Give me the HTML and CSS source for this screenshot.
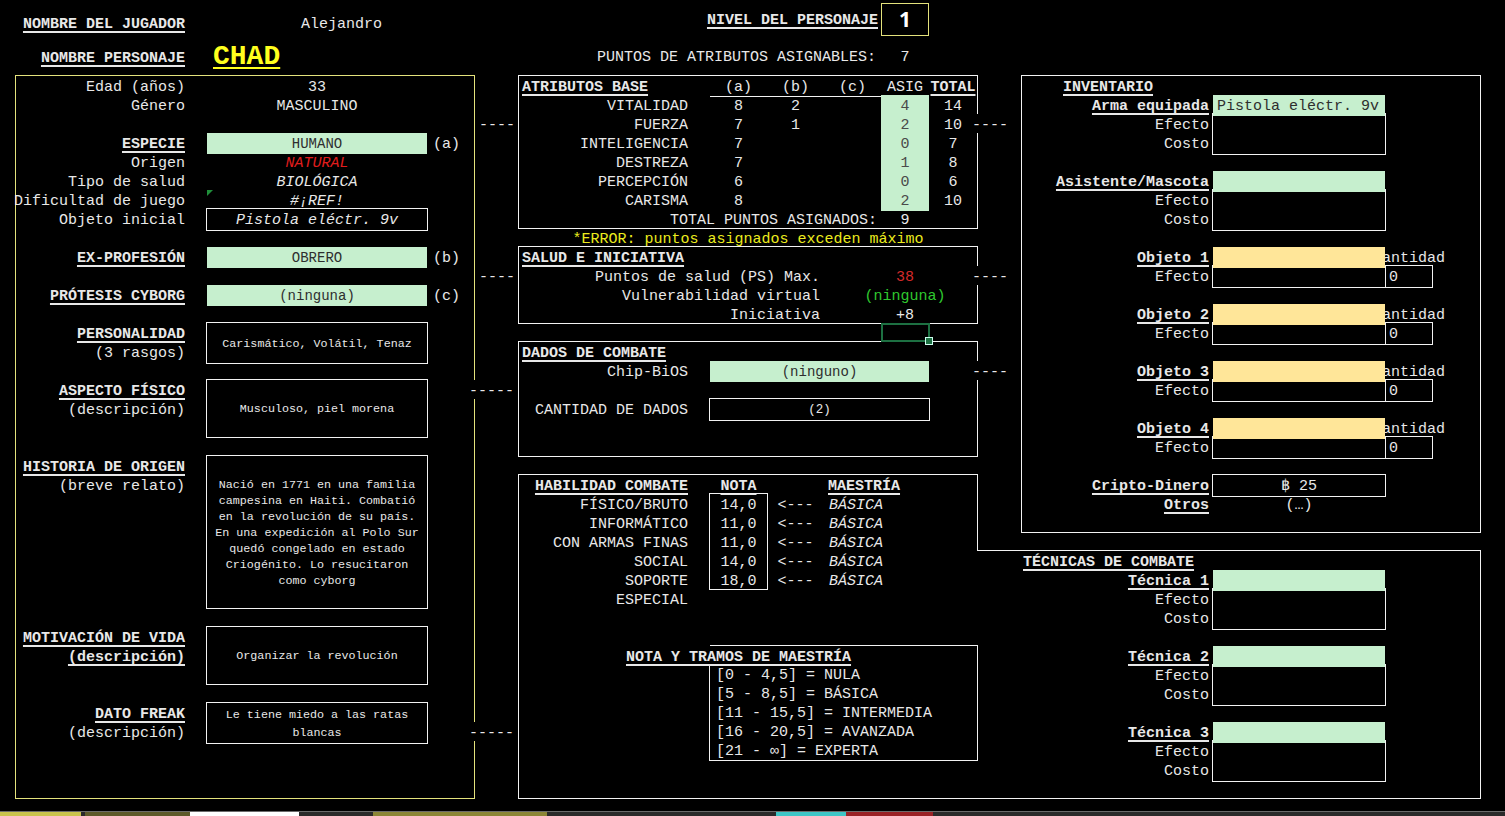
FILE: index.html
```html
<!DOCTYPE html>
<html lang="es">
<head>
<meta charset="utf-8">
<title>Hoja de personaje</title>
<link rel="stylesheet" href="styles.css">
</head>
<body>
<div class="sheet">
  <header class="hleft">
    <div class="hl-row1">
      <span class="lbl u">NOMBRE DEL JUGADOR</span>
      <span class="player">Alejandro</span>
    </div>
    <div class="hl-row2">
      <span class="lbl u">NOMBRE PERSONAJE</span>
      <span class="chad">CHAD</span>
    </div>
  </header>
  <header class="hmid">
    <div class="hm-row1"><span class="hm-lbl u">NIVEL DEL PERSONAJE</span><span class="level">1</span></div>
    <div class="hm-row2"><span class="hm-lbl2">PUNTOS DE ATRIBUTOS ASIGNABLES:</span><span class="c">7</span></div>
  </header>

  <section class="pleft">
    <div class="lr"><span class="lbl">Edad (años)</span><span class="v">33</span></div>
    <div class="lr"><span class="lbl">Género</span><span class="v">MASCULINO</span></div>
    <div class="lr"></div>
    <div class="lr"><span class="lbl u">ESPECIE</span><span class="v g">HUMANO</span><span class="sfx">(a)</span></div>
    <div class="lr"><span class="lbl">Origen</span><span class="v i red">NATURAL</span></div>
    <div class="lr"><span class="lbl">Tipo de salud</span><span class="v i">BIOLÓGICA</span></div>
    <div class="lr"><span class="lbl">Dificultad de juego</span><span class="v i errcell">#¡REF!</span></div>
    <div class="lr"><span class="lbl">Objeto inicial</span><span class="v i bx">Pistola eléctr. 9v</span></div>
    <div class="lr"></div>
    <div class="lr"><span class="lbl u">EX-PROFESIÓN</span><span class="v g">OBRERO</span><span class="sfx">(b)</span></div>
    <div class="lr"></div>
    <div class="lr"><span class="lbl u">PRÓTESIS CYBORG</span><span class="v g">(ninguna)</span><span class="sfx">(c)</span></div>
    <div class="lr"></div>
    <div class="lr h2"><span class="lbl st"><span class="u">PERSONALIDAD</span><span>(3 rasgos)</span></span><span class="v bx sm">Carismático, Volátil, Tenaz</span></div>
    <div class="lr"></div>
    <div class="lr h3"><span class="lbl st"><span class="u">ASPECTO FÍSICO</span><span>(descripción)</span></span><span class="v bx sm">Musculoso, piel morena</span></div>
    <div class="lr"></div>
    <div class="lr h8"><span class="lbl st"><span class="u">HISTORIA DE ORIGEN</span><span>(breve relato)</span></span><span class="v bx sm">Nació en 1771 en una familia<br>campesina en Haiti. Combatió<br>en la revolución de su país.<br>En una expedición al Polo Sur<br>quedó congelado en estado<br>Criogénito. Lo resucitaron<br>como cyborg</span></div>
    <div class="lr"></div>
    <div class="lr h3"><span class="lbl st"><span class="u">MOTIVACIÓN DE VIDA</span><span class="u">(descripción)</span></span><span class="v bx sm">Organizar la revolución</span></div>
    <div class="lr"></div>
    <div class="lr h2"><span class="lbl st"><span class="u">DATO FREAK</span><span>(descripción)</span></span><span class="v bx sm tight">Le tiene miedo a las ratas<br>blancas</span></div>
  </section>

  <span class="dash dl2">----</span>
  <span class="dash dl10">----</span>
  <span class="dash wide dl16">-----</span>
  <span class="dash wide dl34">-----</span>
  <span class="dash dashr dr2">----</span>
  <span class="dash dashr dr10">----</span>
  <span class="dash dashr dr15">----</span>

  <section class="pmid">
    <div class="box attr">
      <div class="mr"><span class="hd u">ATRIBUTOS BASE</span><span class="c hline">(a)</span><span class="c hline">(b)</span><span class="c hline">(c)</span><span class="c hline">ASIG</span><span class="c"><span class="u">TOTAL</span></span></div>
      <div class="mr"><span class="rl">VITALIDAD</span><span class="c">8</span><span class="c">2</span><span class="c"></span><span class="c gnum">4</span><span class="c">14</span></div>
      <div class="mr"><span class="rl">FUERZA</span><span class="c">7</span><span class="c">1</span><span class="c"></span><span class="c gnum">2</span><span class="c">10</span></div>
      <div class="mr"><span class="rl">INTELIGENCIA</span><span class="c">7</span><span class="c"></span><span class="c"></span><span class="c gnum">0</span><span class="c">7</span></div>
      <div class="mr"><span class="rl">DESTREZA</span><span class="c">7</span><span class="c"></span><span class="c"></span><span class="c gnum">1</span><span class="c">8</span></div>
      <div class="mr"><span class="rl">PERCEPCIÓN</span><span class="c">6</span><span class="c"></span><span class="c"></span><span class="c gnum">0</span><span class="c">6</span></div>
      <div class="mr"><span class="rl">CARISMA</span><span class="c">8</span><span class="c"></span><span class="c"></span><span class="c gnum">2</span><span class="c">10</span></div>
      <div class="mr"><span class="tot">TOTAL PUNTOS ASIGNADOS:</span><span class="c">9</span></div>
    </div>
    <div class="errow">*ERROR: puntos asignados exceden máximo</div>
    <div class="box salud">
      <div class="mr"><span class="hd u">SALUD E INICIATIVA</span></div>
      <div class="sr"><span class="rl4">Puntos de salud (PS) Max.</span><span></span><span class="c red2">38</span></div>
      <div class="sr"><span class="rl4">Vulnerabilidad virtual</span><span></span><span class="c grn">(ninguna)</span></div>
      <div class="sr"><span class="rl4">Iniciativa</span><span></span><span class="c">+8</span></div>
    </div>
    <div class="selrow"><span></span><span class="sel"></span></div>
    <div class="box dados">
      <div class="mr"><span class="hd u">DADOS DE COMBATE</span></div>
      <div class="dd"><span class="rl">Chip-BiOS</span><span class="v g">(ninguno)</span></div>
      <div class="dd"></div>
      <div class="dd"><span class="rl">CANTIDAD DE DADOS</span><span class="v bx small">(2)</span></div>
    </div>
    <div class="blank"></div>
    <div class="hab">
      <span class="hb-t1 rl u">HABILIDAD COMBATE</span>
      <span class="hb-t2 c"><span class="u">NOTA</span></span>
      <span class="hb-t3"><span class="u">MAESTRÍA</span></span>
      <span class="hb-edge"></span>
      <div class="hb-labels">
        <span>FÍSICO/BRUTO</span><span>INFORMÁTICO</span><span>CON ARMAS FINAS</span><span>SOCIAL</span><span>SOPORTE</span><span>ESPECIAL</span>
      </div>
      <div class="hb-nota">
        <span>14,0</span><span>11,0</span><span>11,0</span><span>14,0</span><span>18,0</span>
      </div>
      <div class="hb-arr">
        <span>&lt;---</span><span>&lt;---</span><span>&lt;---</span><span>&lt;---</span><span>&lt;---</span>
      </div>
      <div class="hb-mae">
        <span>BÁSICA</span><span>BÁSICA</span><span>BÁSICA</span><span>BÁSICA</span><span>BÁSICA</span>
      </div>
      <div class="tramos">
        <div class="tr-head"><span class="u">NOTA Y TRAMOS DE MAESTRÍA</span></div>
        <div class="tr-list">
          <span>[0 - 4,5] = NULA</span>
          <span>[5 - 8,5] = BÁSICA</span>
          <span>[11 - 15,5] = INTERMEDIA</span>
          <span>[16 - 20,5] = AVANZADA</span>
          <span>[21 - ∞] = EXPERTA</span>
        </div>
      </div>
    </div>
  </section>

  <section class="pinv">
    <div class="ir"><span class="ititle u">INVENTARIO</span></div>
    <div class="ir"><span class="il u">Arma equipada</span><span class="iv g gl">Pistola eléctr. 9v</span></div>
    <div class="ir h2"><span class="il st"><span>Efecto</span><span>Costo</span></span><span class="iv bx"></span></div>
    <div class="ir"></div>
    <div class="ir"><span class="il u">Asistente/Mascota</span><span class="iv g"></span></div>
    <div class="ir h2"><span class="il st"><span>Efecto</span><span>Costo</span></span><span class="iv bx"></span></div>
    <div class="ir"></div>
    <div class="ir"><span class="il u">Objeto 1</span><span class="iv y"></span><span class="qlbl">Cantidad</span></div>
    <div class="ir"><span class="il">Efecto</span><span class="iv bx"></span><span class="qty">0</span></div>
    <div class="ir"></div>
    <div class="ir"><span class="il u">Objeto 2</span><span class="iv y"></span><span class="qlbl">Cantidad</span></div>
    <div class="ir"><span class="il">Efecto</span><span class="iv bx"></span><span class="qty">0</span></div>
    <div class="ir"></div>
    <div class="ir"><span class="il u">Objeto 3</span><span class="iv y"></span><span class="qlbl">Cantidad</span></div>
    <div class="ir"><span class="il">Efecto</span><span class="iv bx"></span><span class="qty">0</span></div>
    <div class="ir"></div>
    <div class="ir"><span class="il u">Objeto 4</span><span class="iv y"></span><span class="qlbl">Cantidad</span></div>
    <div class="ir"><span class="il">Efecto</span><span class="iv bx"></span><span class="qty">0</span></div>
    <div class="ir"></div>
    <div class="ir"><span class="il u">Cripto-Dinero</span><span class="iv bx c">฿ 25</span></div>
    <div class="ir"><span class="il u">Otros</span><span class="iv c">(…)</span></div>
  </section>

  <section class="ptec">
    <div class="tr"><span class="ttitle u">TÉCNICAS DE COMBATE</span></div>
    <div class="tr"><span class="il u">Técnica 1</span><span class="iv g"></span></div>
    <div class="tr h2"><span class="il st"><span>Efecto</span><span>Costo</span></span><span class="iv bx"></span></div>
    <div class="tr"></div>
    <div class="tr"><span class="il u">Técnica 2</span><span class="iv g"></span></div>
    <div class="tr h2"><span class="il st"><span>Efecto</span><span>Costo</span></span><span class="iv bx"></span></div>
    <div class="tr"></div>
    <div class="tr"><span class="il u">Técnica 3</span><span class="iv g"></span></div>
    <div class="tr h2"><span class="il st"><span>Efecto</span><span>Costo</span></span><span class="iv bx"></span></div>
  </section>
</div>
<footer class="tabs">
  <span class="tab t1"></span><span class="tab t2"></span><span class="tab t3"></span><span class="tab t4"></span><span class="tab t5"></span><span class="tab t6"></span><span class="tab t7"></span><span class="tab t8"></span>
</footer>
</body>
</html>
```

FILE: styles.css
```css
* { box-sizing: border-box; margin: 0; padding: 0; }
html, body { background: #000; }
body {
  width: 1505px;
  height: 816px;
  overflow: hidden;
  color: #e8e8e8;
  font-family: "Liberation Mono", "Courier New", monospace;
  font-size: 15px;
  line-height: 19px;
}

.sheet {
  display: grid;
  grid-template-columns: 16px 458px 45px 458px 45px 458px;
  grid-template-rows: 76px repeat(38, 19px);
}

.u {
  font-weight: 700;
  text-decoration: underline;
  text-decoration-thickness: 2px;
  text-underline-offset: 3px;
}
.i { font-style: italic; }
.c { display: flex; justify-content: center; white-space: nowrap; padding-top: 2px; }

/* header */
.hleft { grid-column: 2; grid-row: 1; }
.hl-row1 { display: grid; grid-template-columns: 171px 1fr; height: 19px; margin-top: 13px; }
.hl-row2 { display: grid; grid-template-columns: 171px 1fr; height: 30px; margin-top: 10px; align-items: center; }
.player { padding-left: 114px; padding-top: 2px; }
.chad {
  padding-left: 26px;
  font-size: 28px;
  line-height: 30px;
  font-weight: 700;
  color: #ffff1e;
  text-decoration: underline;
  text-decoration-thickness: 2px;
  text-underline-offset: 3px;
}
.hmid { grid-column: 4; grid-row: 1; padding-top: 3px; }
.hm-row1 { display: grid; grid-template-columns: 362px 48px; height: 33px; }
.hm-lbl { display: flex; justify-content: flex-end; align-items: center; padding-right: 3px; padding-top: 2px; white-space: nowrap; }
.level {
  border: 1px solid #e4e27c;
  display: flex; justify-content: center; align-items: center;
  font-family: "Open Sans", "Liberation Sans", sans-serif;
  font-weight: 700;
  font-size: 21px;
  color: #fff;
}
.hm-row2 { display: grid; grid-template-columns: 362px 48px; height: 19px; margin-top: 10px; }
.hm-lbl2 { display: flex; justify-content: flex-end; padding-right: 5px; padding-top: 2px; white-space: nowrap; }

/* left panel */
.pleft {
  grid-column: 2; grid-row: 2 / span 38;
  box-shadow: 0 0 0 1px #e4e27c;
  display: flex; flex-direction: column;
}
.lr { display: grid; grid-template-columns: 171px 20px 220px 47px; height: 19px; flex: none; }
.lr.h2, .ir.h2, .tr.h2 { height: 38px; }
.lr.h3 { height: 57px; }
.lr.h8 { height: 152px; }
.lbl { grid-column: 1; display: flex; justify-content: flex-end; white-space: nowrap; padding-right: 2px; padding-top: 2px; }
.lbl.st, .il.st { flex-direction: column; align-items: flex-end; justify-content: flex-start; }
.v { grid-column: 3; display: flex; justify-content: center; align-items: flex-start; white-space: nowrap; padding-top: 2px; }
.sfx { grid-column: 4; padding-left: 6px; padding-top: 2px; }
.g { background: #c6efce; color: #2e2e2e; font-size: 14px; position: relative; z-index: 1; }
.y { background: #ffe699; position: relative; z-index: 1; }
.bx { box-shadow: 0 0 0 1px #f2f2f2; }
.v.sm { font-size: 11.7px; line-height: 16px; flex-direction: column; align-items: center; justify-content: center; text-align: center; padding-top: 1px; }
.sm.tight { line-height: 18px; }
.red { color: #e11d1d; }
.red2 { color: #d42a2a; }
.grn { color: #2fc92f; }
.errcell { position: relative; }
.errcell::before {
  content: "";
  position: absolute; left: 0; top: 0;
  border-top: 6px solid #1f8f3a;
  border-right: 6px solid transparent;
}

/* connector dashes */
.dash { justify-self: start; white-space: nowrap; padding-left: 5px; padding-top: 2px; grid-column: 3; }
.dash.wide { margin-left: -5px; padding-left: 0; background: #000; position: relative; z-index: 2; }
.dash.dashr { grid-column: 5; margin-left: -5px; padding-left: 0; background: #000; position: relative; z-index: 2; }
.dl2, .dr2 { grid-row: 4; }
.dl10, .dr10 { grid-row: 12; }
.dl16 { grid-row: 18; }
.dr15 { grid-row: 17; }
.dl34 { grid-row: 36; }

/* middle panel */
.pmid { grid-column: 4; grid-row: 2 / span 38; display: flex; flex-direction: column; }
.box { box-shadow: 0 0 0 1px #f2f2f2; flex: none; }
.attr { height: 152px; }
.mr { display: grid; grid-template-columns: 191px 57px 57px 57px 48px 48px; height: 19px; }
.hd { padding-left: 3px; padding-top: 2px; white-space: nowrap; }
.rl { display: flex; justify-content: flex-end; padding-right: 22px; padding-top: 2px; white-space: nowrap; }
.hline { box-shadow: inset 0 -1px 0 #f2f2f2; }
.gnum { background: #c6efce; color: #4a4a4a; position: relative; z-index: 1; }
.tot { grid-column: 1 / span 4; display: flex; justify-content: flex-end; padding-right: 4px; padding-top: 2px; white-space: nowrap; }
.errow { height: 19px; flex: none; text-align: center; color: #ecec1e; white-space: nowrap; padding-top: 2px; }
.salud { height: 76px; }
.sr { display: grid; grid-template-columns: 305px 57px 48px 48px; height: 19px; }
.rl4 { display: flex; justify-content: flex-end; padding-right: 4px; padding-top: 2px; white-space: nowrap; }
.selrow { display: grid; grid-template-columns: 362px 49px; height: 19px; flex: none; }
.sel { border: 2px solid #1d7042; position: relative; }
.sel::after {
  content: "";
  position: absolute; right: -5px; bottom: -5px;
  width: 6px; height: 6px;
  background: #1d7042;
  border: 1px solid #cfe;
}
.dados { height: 114px; }
.dd { display: grid; grid-template-columns: 191px 219px; height: 19px; }
.dd .v { grid-column: 2; }
.small { font-size: 12.5px; }
.blank { height: 19px; flex: none; }

.hab {
  height: 323px; flex: none;
  display: grid;
  grid-template-columns: 191px 57px 57px 57px 48px 48px;
  grid-template-rows: repeat(17, 19px);
  box-shadow: -1px -1px 0 #f2f2f2, -1px 1px 0 #f2f2f2, 0 -1px 0 #f2f2f2, 0 1px 0 #f2f2f2;
}
.hb-t1 { grid-column: 1; grid-row: 1; }
.hb-t2 { grid-column: 2; grid-row: 1; }
.hb-t3 { grid-column: 4 / span 3; grid-row: 1; padding-left: 4px; padding-top: 2px; white-space: nowrap; }
.hb-edge { grid-column: 6; grid-row: 1 / span 4; box-shadow: 1px 0 0 #f2f2f2, 1px -1px 0 #f2f2f2; }
.hb-labels { grid-column: 1; grid-row: 2 / span 6; display: flex; flex-direction: column; align-items: flex-end; padding-right: 22px; padding-top: 2px; white-space: nowrap; }
.hb-nota { grid-column: 2; grid-row: 2 / span 5; display: flex; flex-direction: column; align-items: center; padding-top: 2px; box-shadow: 0 0 0 1px #f2f2f2; }
.hb-arr { grid-column: 3; grid-row: 2 / span 5; display: flex; flex-direction: column; align-items: center; padding-top: 2px; }
.hb-mae { grid-column: 4 / span 3; grid-row: 2 / span 5; display: flex; flex-direction: column; padding-left: 5px; padding-top: 2px; font-style: italic; }
.tramos {
  grid-column: 2 / span 5; grid-row: 10 / span 6;
  box-shadow: 0 -1px 0 #f2f2f2, 1px -1px 0 #f2f2f2, 1px 1px 0 #f2f2f2, 0 1px 0 #f2f2f2;
}
.tr-head { width: 57px; height: 19px; display: flex; justify-content: center; white-space: nowrap; padding-top: 2px; }
.tr-list {
  display: flex; flex-direction: column;
  height: 95px;
  padding-left: 6px; padding-top: 1px; white-space: nowrap;
  box-shadow: -1px 0 0 #f2f2f2, -1px 1px 0 #f2f2f2;
}

/* inventory */
.pinv { grid-column: 6; grid-row: 2 / span 24; box-shadow: 0 0 0 1px #f2f2f2; display: flex; flex-direction: column; }
.ir { display: grid; grid-template-columns: 191px 172px 95px; height: 19px; flex: none; }
.ititle { grid-column: 1 / span 3; padding-left: 41px; padding-top: 2px; white-space: nowrap; }
.il { grid-column: 1; display: flex; justify-content: flex-end; padding-right: 4px; padding-top: 2px; white-space: nowrap; }
.iv { grid-column: 2; }
.gl { font-size: 15px; padding-left: 4px; padding-top: 2px; white-space: nowrap; }
.iv.c { display: flex; justify-content: center; }
.qlbl { grid-column: 3; margin-left: -12px; padding-top: 2px; white-space: nowrap; }
.qty {
  grid-column: 3; width: 47px; padding-left: 4px; padding-top: 2px;
  box-shadow: 0 -1px 0 #f2f2f2, 1px -1px 0 #f2f2f2, 1px 1px 0 #f2f2f2, 0 1px 0 #f2f2f2;
}

/* techniques */
.ptec {
  grid-column: 5 / span 2; grid-row: 27 / span 13;
  display: flex; flex-direction: column;
  box-shadow: 0 -1px 0 #f2f2f2, 1px -1px 0 #f2f2f2, 1px 1px 0 #f2f2f2, 0 1px 0 #f2f2f2;
}
.tr { display: grid; grid-template-columns: 236px 172px 1fr; height: 19px; flex: none; }
.ttitle { grid-column: 1 / span 3; padding-left: 46px; padding-top: 2px; white-space: nowrap; }

/* sheet tabs strip */
.tabs { margin-top: 13px; height: 5px; border-top: 1px solid #6b6b6b; background: #2a2a2a; display: flex; }
.tab { height: 4px; flex: none; }
.t1 { width: 81px; background: #c9c34c; }
.t2 { width: 4px; }
.t3 { width: 105px; background: #5e5a2a; }
.t4 { width: 109px; background: #ffffff; }
.t5 { width: 74px; }
.t6 { width: 174px; background: #8c8636; }
.t7 { width: 229px; }
.t8 { width: 157px; background: linear-gradient(90deg, #3ec6c6 0 70px, #9a2226 70px 157px); }
```
